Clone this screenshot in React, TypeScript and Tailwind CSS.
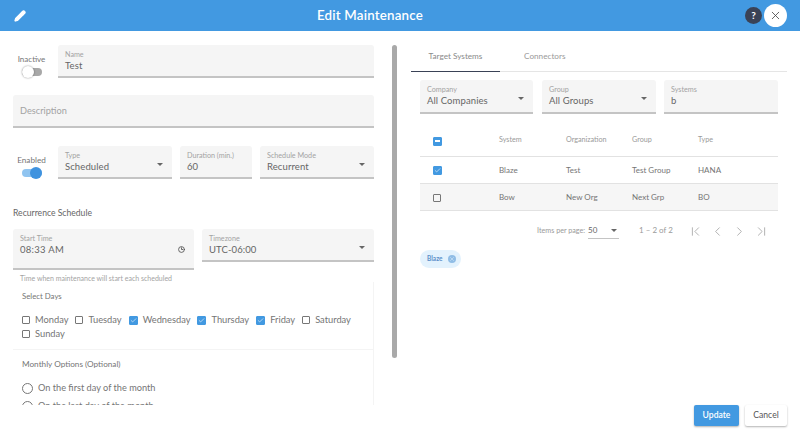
import React from 'react'
import { ChevronFirst, ChevronLast, ChevronLeft, ChevronRight, Pencil, X, Check, Clock3 } from 'lucide-react'

const font = { fontFamily: 'Lato, "Noto Sans", sans-serif' }

function Field({ label, value, select, className = '' }: { label: string; value: string; select?: boolean; className?: string }) {
  return (
    <div className={`relative bg-[#f5f5f5] border-b-2 border-[#c4c4c4] rounded-t-[3px] px-[7px] pt-[5px] ${className}`}>
      <div className="text-[7.2px] leading-[10px] text-[#a3a3a3] whitespace-nowrap">{label}</div>
      <div className="text-[9.5px] leading-[12px] tracking-[0.1px] text-[#666] whitespace-nowrap">{value}</div>
      {select && <Caret />}
    </div>
  )
}

function Caret() {
  return <span className="absolute right-[9px] top-[17px] w-0 h-0 border-x-[3px] border-x-transparent border-t-[3px] border-t-[#666]" />
}

function Toggle({ on }: { on?: boolean }) {
  return (
    <div className="relative w-[20px] h-[10px]">
      <div className={`absolute left-0 right-0 top-[1px] h-[8px] rounded-full ${on ? 'bg-[#90c4f0]' : 'bg-[#a8a8a8]'}`} />
      <div className={`absolute top-[-1px] w-[12px] h-[12px] rounded-full ${on ? 'right-0 bg-[#3f93df]' : 'left-0 bg-white shadow-[0_0_2px_rgba(0,0,0,0.45)]'}`} />
    </div>
  )
}

function Box({ on, className = '' }: { on?: boolean; className?: string }) {
  if (on) {
    return (
      <span className={`flex items-center justify-center w-[7px] h-[7px] box-content border border-[#4299e1] bg-[#4299e1] rounded-[1px] shrink-0 ${className}`}>
        <Check size={7} strokeWidth={2} className="text-white" />
      </span>
    )
  }
  return <span className={`block w-[6px] h-[6px] box-content border-[1.5px] border-[#777] rounded-[1px] shrink-0 ${className}`} />
}

function Day({ label, on }: { label: string; on?: boolean }) {
  return (
    <span className="flex items-center gap-[5px] text-[9.3px] leading-[14px] text-[#757575]">
      <Box on={on} />
      {label}
    </span>
  )
}

function Row({ cells, box, shaded }: { cells: string[]; box: React.ReactNode; shaded?: boolean }) {
  return (
    <div className={`flex items-center h-[27px] border-b border-[#e2e2e2] text-[8px] text-[#757575] ${shaded ? 'bg-[#f6f6f6]' : ''}`}>
      <div className="w-[79px] pl-[13px] pt-[1px]">{box}</div>
      <div className="w-[67px]">{cells[0]}</div>
      <div className="w-[66px]">{cells[1]}</div>
      <div className="w-[66px]">{cells[2]}</div>
      <div>{cells[3]}</div>
    </div>
  )
}

export default function App() {
  return (
    <div className="w-[800px] h-[438px] bg-white flex flex-col overflow-hidden" style={font}>
      <header className="relative h-[31px] shrink-0 bg-[#4299e1] flex items-center justify-center pr-[60px]">
        <Pencil size={12} strokeWidth={2.5} fill="white" className="absolute left-[14px] top-[10px] text-white" />
        <span className="text-[13.3px] font-semibold tracking-[0.2px] text-white">Edit Maintenance</span>
        <span className="absolute right-[38px] top-[7px] w-[17px] h-[17px] rounded-full bg-[#3a4256] flex items-center justify-center text-[10px] font-bold text-white">?</span>
        <span className="absolute right-[13px] top-[4px] w-[23px] h-[23px] rounded-full bg-white flex items-center justify-center">
          <X size={13} strokeWidth={1.5} className="text-[#444]" />
        </span>
      </header>

      <div className="flex-1 flex min-h-0">
        <div className="w-[392px] shrink-0 h-[374px] overflow-hidden pl-[13px] pr-[18px] pt-[14px]">
          <div className="flex gap-[8px] h-[33px]">
            <div className="w-[37px] flex flex-col items-center pt-[8px]">
              <span className="text-[8px] leading-[12px] text-[#757575] mb-[2px]">Inactive</span>
              <Toggle />
            </div>
            <Field label="Name" value="Test" className="flex-1" />
          </div>

          <div className="mt-[17px] h-[33px] bg-[#f5f5f5] border-b-2 border-[#c4c4c4] rounded-t-[3px] px-[7px] flex items-center text-[9.2px] text-[#a3a3a3]">
            Description
          </div>

          <div className="mt-[18px] flex gap-[8px] h-[33px]">
            <div className="w-[37px] flex flex-col items-center pt-[8px]">
              <span className="text-[8.2px] leading-[12px] text-[#757575] mb-[2px]">Enabled</span>
              <Toggle on />
            </div>
            <Field label="Type" value="Scheduled" select className="w-[114px]" />
            <Field label="Duration (min.)" value="60" className="w-[72px]" />
            <Field label="Schedule Mode" value="Recurrent" select className="flex-1" />
          </div>

          <div className="mt-[28px] text-[8.6px] leading-[12px] text-[#666]">Recurrence Schedule</div>

          <div className="mt-[10px] flex items-start gap-[8px]">
            <div className="relative w-[181px] h-[41px] bg-[#f5f5f5] border-b-2 border-[#c4c4c4] rounded-t-[3px] px-[7px] pt-[5px]">
              <div className="text-[7.2px] leading-[10px] text-[#a3a3a3]">Start Time</div>
              <div className="text-[9.5px] leading-[12px] tracking-[0.3px] text-[#666]">08:33 AM</div>
              <Clock3 size={7} strokeWidth={3} className="absolute right-[9px] top-[17px] text-[#555]" />
            </div>
            <Field label="Timezone" value="UTC-06:00" select className="flex-1 h-[33px]" />
          </div>

          <div className="mt-[3px] pl-[7px] text-[7px] leading-[10px] text-[#a3a3a3] whitespace-nowrap">Time when maintenance will start each scheduled</div>

          <div className="-mt-px h-[68px] pl-[9px] pt-[8px] border-b border-r border-[#f4f4f4]">
            <div className="text-[7.8px] leading-[12px] text-[#757575]">Select Days</div>
            <div className="mt-[11px] flex flex-wrap gap-x-[7px]">
              <Day label="Monday" />
              <Day label="Tuesday" />
              <Day label="Wednesday" on />
              <Day label="Thursday" on />
              <Day label="Friday" on />
              <Day label="Saturday" />
              <Day label="Sunday" />
            </div>
          </div>

          <div className="pl-[9px] pt-[8px] border-r border-[#f4f4f4]">
            <div className="text-[8.2px] leading-[12px] text-[#757575]">Monthly Options (Optional)</div>
            <div className="mt-[12px] flex flex-col gap-[6px] text-[9.2px] text-[#757575]">
              <label className="flex items-center gap-[5px] h-[12px]">
                <span className="w-[11px] h-[11px] rounded-full border-[1.5px] border-[#777]" />
                On the first day of the month
              </label>
              <label className="flex items-center gap-[5px] h-[12px]">
                <span className="w-[11px] h-[11px] rounded-full border-[1.5px] border-[#777]" />
                On the last day of the month
              </label>
            </div>
          </div>
        </div>

        <div className="w-[5px] h-[313px] mt-[14px] bg-[#a9a9a9] rounded-full shrink-0" />

        <div className="flex-1 flex flex-col pl-[14px] pr-[13px] pt-[10px]">
          <div className="flex h-[31px] border-b border-[#e5e5e5] text-[8.2px] text-[#8a8a8a]">
            <div className="w-[89px] flex items-center justify-center border-b-[1.5px] border-[#3a4256] h-[31px]">Target Systems</div>
            <div className="pl-[24px] flex items-center text-[#9a9a9a]">Connectors</div>
          </div>

          <div className="mt-[8px] mx-[9px] flex">
            <Field label="Company" value="All Companies" select className="w-[113px] h-[34px]" />
            <Field label="Group" value="All Groups" select className="ml-[9px] w-[114px] h-[34px]" />
            <Field label="Systems" value="b" className="ml-[8px] flex-1 h-[34px]" />
          </div>

          <div className="mt-[10px] mx-[9px]">
            <div className="flex items-center h-[33px] border-b border-[#e2e2e2] text-[7.2px] text-[#9a9a9a]">
              <div className="w-[79px] pl-[13px] pt-[2px]">
                <span className="flex items-center justify-center w-[7px] h-[7px] box-content border border-[#4299e1] bg-[#4299e1] rounded-[1px]">
                  <span className="w-[5px] h-[1.5px] bg-white" />
                </span>
              </div>
              <div className="w-[67px]">System</div>
              <div className="w-[66px]">Organization</div>
              <div className="w-[66px]">Group</div>
              <div>Type</div>
            </div>
            <Row cells={['Blaze', 'Test', 'Test Group', 'HANA']} box={<Box on />} />
            <Row cells={['Bow', 'New Org', 'Next Grp', 'BO']} box={<Box />} shaded />
          </div>

          <div className="mt-[9px] ml-[9px] flex items-center h-[22px] text-[7.2px] text-[#9a9a9a] whitespace-nowrap">
            <span className="ml-[117px] w-[46px]">Items per page:</span>
            <span className="relative ml-[5px] w-[31px] h-[15px] border-b border-[#c4c4c4] text-[8px] leading-[13px] text-[#666]">
              50
              <span className="absolute right-[2px] top-[5px] w-0 h-0 border-x-[3px] border-x-transparent border-t-[3px] border-t-[#666]" />
            </span>
            <span className="ml-[20px] w-[27px] text-[8px] -mt-[3px]">1 – 2 of 2</span>
            <span className="ml-[22px] flex gap-[7px] text-[#9a9a9a]">
              <ChevronFirst size={15} strokeWidth={1.2} />
              <ChevronLeft size={15} strokeWidth={1.2} />
              <ChevronRight size={15} strokeWidth={1.2} />
              <ChevronLast size={15} strokeWidth={1.2} />
            </span>
          </div>

          <div className="mt-[8px] ml-[9px] flex">
            <span className="flex items-center gap-[5px] h-[18px] pl-[7px] pr-[5px] rounded-full bg-[#e3f2fd] text-[6.5px] font-bold text-[#5b8fc9]">
              Blaze
              <span className="w-[8px] h-[8px] rounded-full bg-[#90bde6] flex items-center justify-center">
                <X size={6} strokeWidth={2} className="text-[#e3f2fd]" />
              </span>
            </span>
          </div>

          <div className="mt-auto mb-[12px] flex justify-end gap-[6px]">
            <button className="w-[45px] h-[21px] rounded-[2px] bg-[#4299e1] text-[8.6px] font-semibold text-white shadow-[0_1px_2px_rgba(0,0,0,0.3)]">Update</button>
            <button className="w-[42px] h-[21px] rounded-[2px] bg-white text-[8.6px] text-[#555] shadow-[0_1px_2px_rgba(0,0,0,0.3)]">Cancel</button>
          </div>
        </div>
      </div>
    </div>
  )
}
